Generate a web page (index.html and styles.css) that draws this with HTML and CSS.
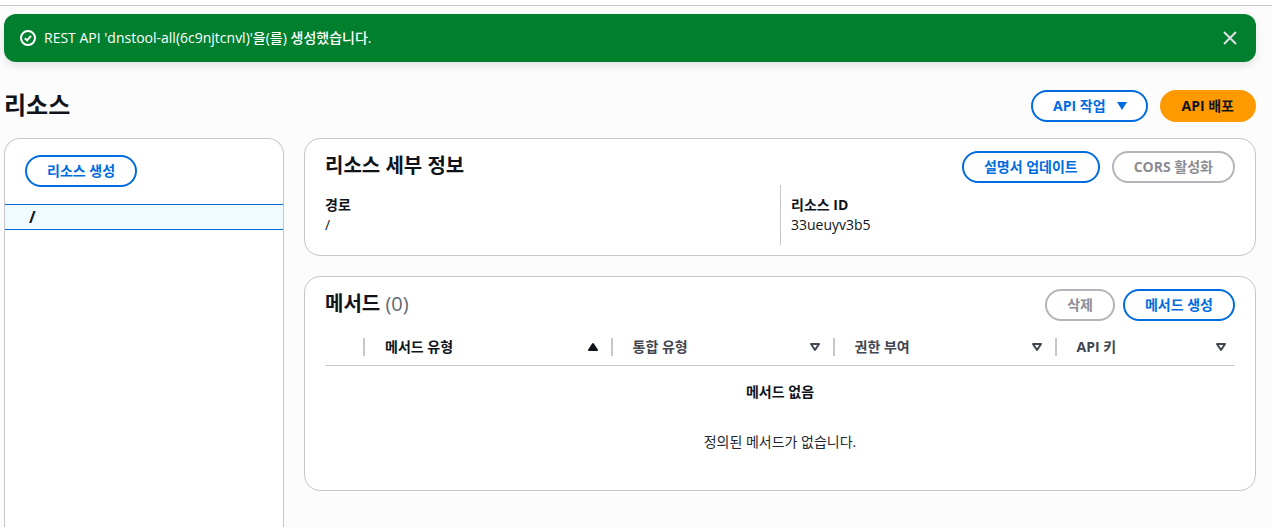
FILE: index.html
```html
<!DOCTYPE html>
<html lang="ko">
<head>
<meta charset="utf-8">
<meta name="viewport" content="width=device-width, initial-scale=1">
<title>리소스</title>
<link rel="stylesheet" href="styles.css">
</head>
<body>
<div class="topbar"></div>
<main class="page">
  <div class="flash" role="status">
    <svg class="icon" viewBox="0 0 16 16" aria-hidden="true"><circle cx="8" cy="8" r="7"/><path d="M4.8 8.2l2.3 2.1 3.9-4.5"/></svg>
    <p class="flash-text">REST API 'dnstool-all(6c9njtcnvl)'을(를) 생성했습니다.</p>
    <button class="flash-close" type="button" aria-label="닫기">
      <svg class="icon" viewBox="0 0 16 16" aria-hidden="true"><path d="M2 2l12 12M14 2L2 14"/></svg>
    </button>
  </div>

  <header class="page-header">
    <h1 class="page-title">리소스</h1>
    <div class="actions actions-wide">
      <button class="btn btn-menu" type="button">API 작업
        <svg class="caret" viewBox="0 0 16 16" aria-hidden="true"><path d="M3 4h10l-5 8z"/></svg>
      </button>
      <button class="btn btn-primary" type="button">API 배포</button>
    </div>
  </header>

  <div class="columns">
    <aside class="card sidebar">
      <div class="sidebar-top"><button class="btn" type="button">리소스 생성</button></div>
      <a class="tree-item" href="#root">/</a>
    </aside>

    <div class="content">
      <section class="card">
        <div class="card-header">
          <h2 class="card-title">리소스 세부 정보</h2>
          <div class="actions actions-wide">
            <button class="btn" type="button">설명서 업데이트</button>
            <button class="btn" type="button" disabled>CORS 활성화</button>
          </div>
        </div>
        <dl class="details">
          <div class="detail"><dt>경로</dt><dd>/</dd></div>
          <div class="detail"><dt>리소스 ID</dt><dd>33ueuyv3b5</dd></div>
        </dl>
      </section>

      <section class="card">
        <div class="card-header">
          <h2 class="card-title">메서드 <span class="count">(0)</span></h2>
          <div class="actions">
            <button class="btn" type="button" disabled>삭제</button>
            <button class="btn" type="button">메서드 생성</button>
          </div>
        </div>
        <table class="methods">
          <colgroup><col class="col-select"><col class="col-method"><col class="col-mid"><col class="col-mid"><col></colgroup>
          <thead>
            <tr>
              <th><div class="sort"></div></th>
              <th aria-sort="ascending"><button class="sort sorted" type="button">메서드 유형<svg class="icon-sort" viewBox="0 0 16 16" aria-hidden="true"><path d="M4 11h8L8 5z"/></svg></button></th>
              <th><button class="sort" type="button">통합 유형<svg class="icon-sort" viewBox="0 0 16 16" aria-hidden="true"><path d="M4 5h8l-4 6z"/></svg></button></th>
              <th><button class="sort" type="button">권한 부여<svg class="icon-sort" viewBox="0 0 16 16" aria-hidden="true"><path d="M4 5h8l-4 6z"/></svg></button></th>
              <th><button class="sort sort-last" type="button">API 키<svg class="icon-sort" viewBox="0 0 16 16" aria-hidden="true"><path d="M4 5h8l-4 6z"/></svg></button></th>
            </tr>
          </thead>
          <tbody>
            <tr>
              <td class="empty" colspan="5">
                <p class="empty-title">메서드 없음</p>
                <p class="empty-text">정의된 메서드가 없습니다.</p>
              </td>
            </tr>
          </tbody>
        </table>
      </section>
    </div>
  </div>
</main>
</body>
</html>
```
FILE: styles.css
```css
* {
  box-sizing: border-box;
}

body,
h1,
h2,
p,
dl,
dd {
  margin: 0;
}

body {
  display: flex;
  flex-direction: column;
  min-height: 100vh;
  background: #fcfcfd;
  color: #0f141a;
  font-family: "Open Sans", "Noto Sans CJK KR", sans-serif;
  font-size: 14px;
  line-height: 20px;
}

button {
  font: inherit;
  cursor: pointer;
}

.topbar {
  height: 6px;
  background: #fff;
  border-bottom: 1px solid #c6c6cd;
}

.page {
  display: flex;
  flex: 1;
  flex-direction: column;
  padding: 8px 16px 0 4px;
}

.flash {
  display: flex;
  align-items: center;
  gap: 8px;
  min-height: 48px;
  padding: 8px 18px 8px 16px;
  border-radius: 12px;
  background: #00802f;
  box-shadow: 0 4px 8px rgba(0, 7, 22, 0.1);
  color: #fff;
}

.flash-text {
  flex: 1;
  font-weight: 500;
}

.flash-close {
  display: flex;
  padding: 0;
  border: 0;
  background: none;
  color: #dedee3;
}

.icon {
  width: 16px;
  height: 16px;
  fill: none;
  stroke: currentColor;
  stroke-width: 2;
}

.page-header,
.card-header {
  display: flex;
  align-items: center;
  justify-content: space-between;
}

.page-header {
  margin: 28px 0 16px;
}

.page-title,
.card-title {
  padding-bottom: 2px;
}

.page-title {
  font-size: 24px;
  line-height: 30px;
}

.card-title {
  font-size: 20px;
  line-height: 24px;
}

.count {
  color: #656871;
  font-weight: 400;
}

.actions {
  display: flex;
  gap: 8px;
}

.actions-wide {
  gap: 12px;
}

.btn {
  display: flex;
  align-items: center;
  min-height: 32px;
  padding: 4px 20px;
  border: 2px solid #006ce0;
  border-radius: 20px;
  background: #fff;
  color: #006ce0;
  font-weight: 700;
  white-space: nowrap;
}

.btn:disabled {
  border-color: #b4b4bb;
  color: #8c8c94;
}

.btn-primary {
  border-color: #ff9900;
  background: #ff9900;
  color: #0f141a;
}

.btn-menu {
  gap: 8px;
  padding-right: 16px;
}

.caret {
  width: 16px;
  height: 16px;
  fill: currentColor;
}

.columns {
  display: grid;
  flex: 1;
  grid-template-columns: 280px minmax(0, 1fr);
  gap: 20px;
}

.content {
  display: flex;
  flex-direction: column;
  gap: 20px;
}

.card {
  padding: 12px 20px 10px;
  border: 1px solid #c6c6cd;
  border-radius: 16px;
  background: #fff;
}

.sidebar {
  padding: 16px 0;
  border-bottom: 0;
  border-radius: 16px 16px 0 0;
}

.sidebar-top {
  display: flex;
  padding: 0 20px 17px;
}

.tree-item {
  display: block;
  padding: 2px 24px;
  border: solid #006ce0;
  border-width: 1px 0;
  background: #f0fbff;
  color: #0f141a;
  font-size: 16px;
  font-weight: 700;
  text-decoration: none;
}

.details {
  display: grid;
  grid-template-columns: 1fr 1fr;
  margin-top: 2px;
}

.detail {
  padding: 10px 0;
}

.detail + .detail {
  padding-left: 10px;
  border-left: 1px solid #c6c6cd;
}

.detail dt {
  font-weight: 700;
}

.methods {
  width: 100%;
  margin-top: 8px;
  border-collapse: collapse;
  table-layout: fixed;
}

.col-select {
  width: 40px;
}

.col-method {
  width: 27.2%;
}

.col-mid {
  width: 24.4%;
}

.methods th {
  padding: 9px 0;
  border-bottom: 1px solid #c6c6cd;
}

.sort {
  display: flex;
  align-items: center;
  justify-content: space-between;
  width: 100%;
  height: 18px;
  padding: 0 10px 0 20px;
  border: 0;
  border-right: 2px solid #c6c6cd;
  background: none;
  color: #424650;
  font-weight: 700;
}

.sort-last {
  padding-right: 6px;
  border-right: 0;
}

.sorted {
  color: #0f141a;
}

.icon-sort {
  width: 16px;
  height: 16px;
  fill: none;
  stroke: currentColor;
  stroke-linejoin: round;
  stroke-width: 2;
}

.sorted .icon-sort {
  fill: currentColor;
}

.empty {
  padding: 16px 0 28px;
  text-align: center;
}

.empty-title {
  margin-bottom: 30px;
  font-weight: 700;
}

.empty-text {
  color: #23282f;
}
```
